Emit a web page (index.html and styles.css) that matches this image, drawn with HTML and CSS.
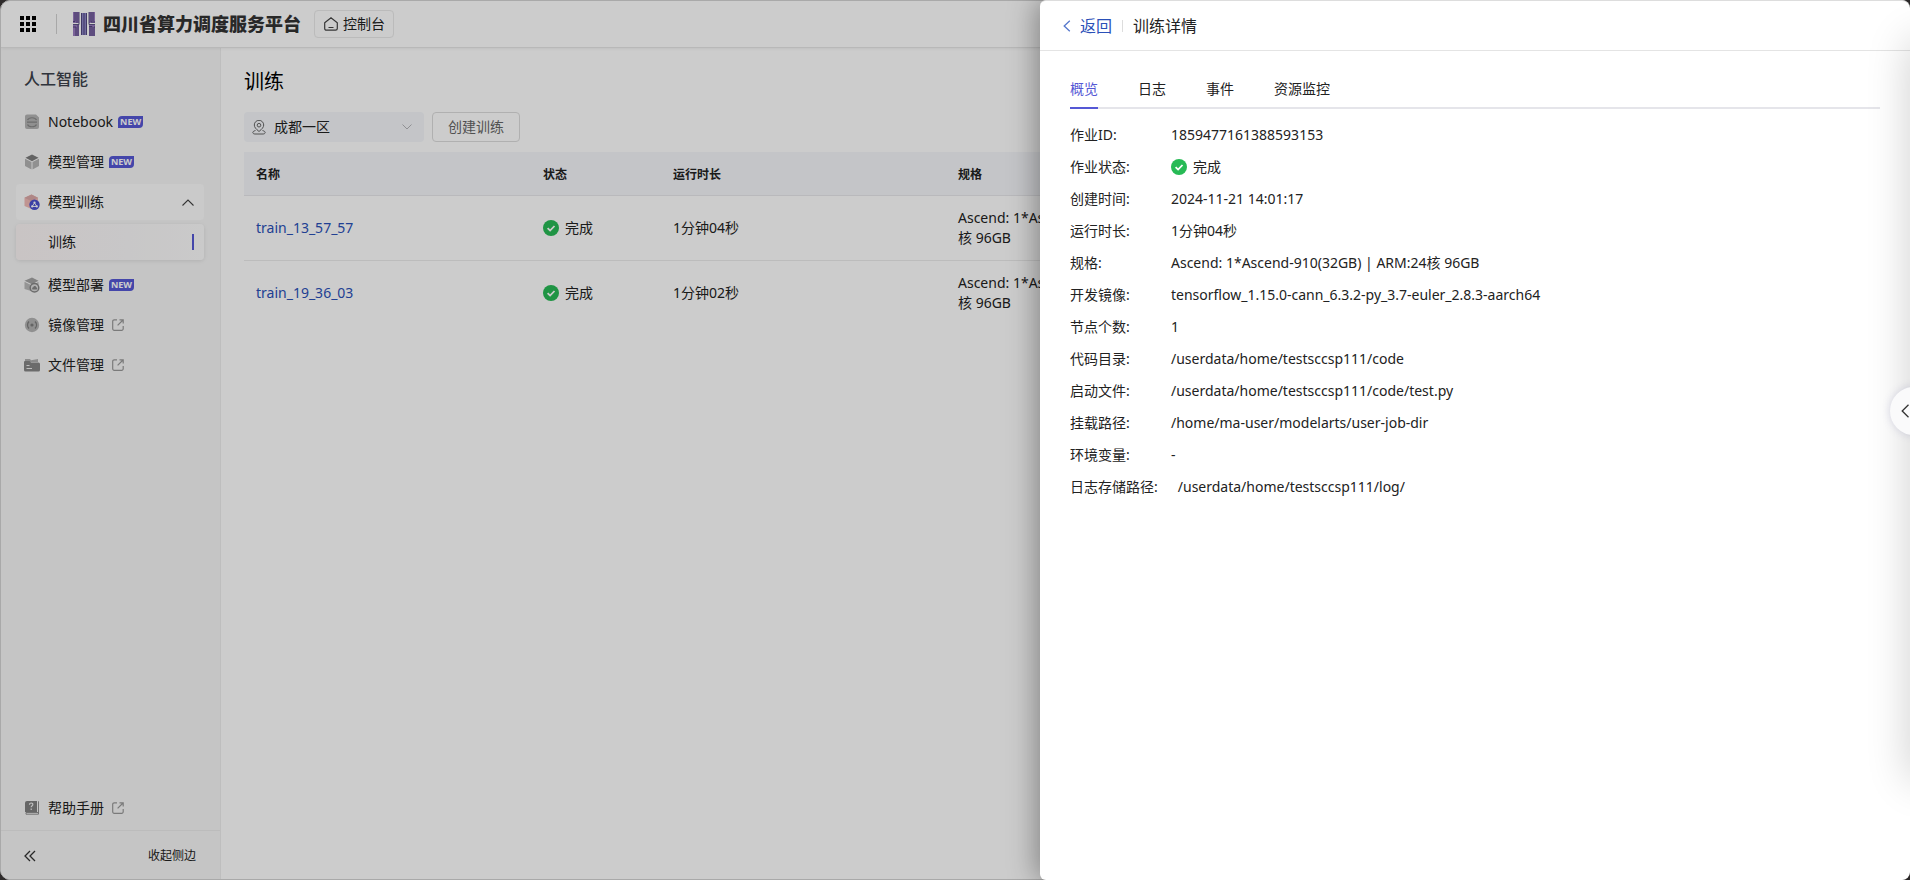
FILE: index.html
```html
<!DOCTYPE html>
<html lang="zh-CN">
<head>
<meta charset="utf-8">
<title>训练详情</title>
<link rel="stylesheet" href="styles.css">
</head>
<body>
<svg class="defs" aria-hidden="true">
  <symbol id="ext" viewBox="0 0 12 12"><path d="M5 .8H2.2A1.5 1.5 0 0 0 .7 2.3v7.5a1.5 1.5 0 0 0 1.5 1.5h7.5a1.5 1.5 0 0 0 1.5-1.5V7M7.5.8h3.7v3.7M11 1 5.6 6.4" fill="none" stroke="currentColor" stroke-width="1.2"/></symbol>
  <symbol id="ok" viewBox="0 0 16 16"><circle cx="8" cy="8" r="8" fill="#27ba55"/><path d="m4.600 8.200 2.500 2.400 4.400-4.600" fill="none" stroke="#fff" stroke-width="1.800"/></symbol>
</svg>
<div class="app">
  <header class="topbar">
    <button class="plain" aria-label="全部应用">
      <svg width="16" height="16" viewBox="0 0 16 16"><path d="M0 0h4v4H0zM6 0h4v4H6zM12 0h4v4h-4zM0 6h4v4H0zM6 6h4v4H6zM12 6h4v4h-4zM0 12h4v4H0zM6 12h4v4H6zM12 12h4v4h-4z"/></svg>
    </button>
    <span class="rule"></span>
    <span class="brand">
      <svg width="22" height="24" viewBox="0 0 22 24"><path d="M0 0h6v11H0zM0 13h6v11H0zM16 0h6v11h-6zM16 13h6v11h-6z" fill="#9a7cc0"/><path d="M8 1h6v22H8z" fill="#8d86c6"/><path d="M2 0v9.500H0M4 0v11M6 0v12.500H0M0 15h3v9M5 13v11M20 0v9M18 0v10h4M16 0v12.500h6M16 14.500h3V24M17 15v9M22 15h-1v9M8.500 1v22M11 1v22M13.500 1v22" fill="none" stroke="#4a3f77" stroke-width=".9"/></svg>
      <strong>四川省算力调度服务平台</strong>
    </span>
    <button class="console">
      <svg width="14" height="14" viewBox="0 0 14 14"><path d="M.7 5.800 7 .8l6.300 5v5.700a1.700 1.700 0 0 1-1.700 1.700H2.400A1.700 1.700 0 0 1 .7 11.500zM4.500 10.500h5" fill="none" stroke="#444" stroke-width="1.200"/></svg>
      控制台
    </button>
  </header>
  <div class="body">
    <aside class="side">
      <h2>人工智能</h2>
      <nav class="menu">
        <a class="item" href="#"><svg class="ico" viewBox="0 0 16 16"><path d="M3 .5h9l3 3V13a2 2 0 0 1-2 2H3a2 2 0 0 1-2-2V2.500a2 2 0 0 1 2-2z" fill="#b4b4b4"/><path d="M3.500 6C5 3 11 3 12.500 6M3.500 10.500C5 13.500 11 13.500 12.500 10.500M3 8.200h10" fill="none" stroke="#888" stroke-width="1.200"/></svg>Notebook<span class="new">NEW</span></a>
        <a class="item" href="#"><svg class="ico" viewBox="0 0 16 16"><path d="m8 .5 6.500 3.300L8 7.200 1.500 3.800z" fill="#7c7c7c"/><path d="M1 4.800 7.500 8v7.500L1 12zM15 4.800 8.500 8v7.500L15 12z" fill="#b4b4b4"/></svg>模型管理<span class="new">NEW</span></a>
        <a class="item open" href="#"><svg class="ico" viewBox="0 0 16 16"><path d="m7.500.5 6.500 3.300v3L7.500 15 .5 12V3.800z" fill="#f0bab6"/><path d="m7.500.5 6.500 3.300-6.500 3.400-7-3.400z" fill="#dba9a8"/><circle cx="10.500" cy="10.800" r="5.200" fill="#4a51cf"/><path d="m10.500 8.800-2.300 3.700h4.600z" fill="none" stroke="#fff" stroke-width=".9"/><circle cx="10.500" cy="8.600" r="1.100" fill="#fff"/><circle cx="8.200" cy="12.400" r="1.100" fill="#fff"/><circle cx="12.800" cy="12.400" r="1.100" fill="#fff"/></svg>模型训练<svg class="caret" width="12" height="7" viewBox="0 0 12 7"><path d="M.5 6.500 6 1l5.500 5.500" fill="none" stroke="#444" stroke-width="1.100"/></svg></a>
        <a class="item sub" href="#">训练<i class="mark"></i></a>
        <a class="item" href="#"><svg class="ico" viewBox="0 0 16 16"><path d="m8 .5 6.500 3.300L8 7.200.5 3.800z" fill="#a4a4a4"/><path d="M.5 4.800 7 8v6L.5 12zM14.500 4.800V8L8 9z" fill="#bababa"/><circle cx="10.500" cy="10.800" r="4.300" fill="#ddd" stroke="#888" stroke-width="1.500"/><path d="M8.500 12.500c-1-2 .5-2.300.8-2.300.6-1.700 2.700-1.300 2.900 0 1.500.4 1.300 2.300 0 2.300z" fill="#888"/></svg>模型部署<span class="new">NEW</span></a>
        <a class="item" href="#"><svg class="ico" viewBox="0 0 16 16"><circle cx="8" cy="8" r="7.200" fill="#b4b4b4"/><circle cx="8" cy="8" r="1.600" fill="#7e7e7e"/><path d="M5 4.500c-2 2-2 5 0 7M11 4.500c2 2 2 5 0 7" fill="none" stroke="#7e7e7e" stroke-width="1.300"/></svg>镜像管理<svg class="ext"><use href="#ext"/></svg></a>
        <a class="item" href="#"><svg class="ico" viewBox="0 0 16 16"><path d="M1 2h5l1 1.200L14 2v3H1z" fill="#b0b0b0"/><path d="M0 5a1 1 0 0 1 1-1h4.500L7 5.500h7.500A1.500 1.500 0 0 1 16 7v6a1.500 1.500 0 0 1-1.500 1.500h-13A1.500 1.500 0 0 1 0 13z" fill="#868686"/><path d="M2.500 8.500h3M2.500 11.500h5.500" stroke="#eee"/></svg>文件管理<svg class="ext"><use href="#ext"/></svg></a>
      </nav>
      <a class="item help" href="#"><svg class="ico" viewBox="0 0 16 16"><path d="M3 1h10v11H1V3a2 2 0 0 1 2-2z" fill="#808080"/><path d="M14.500 1.500v11H2v1.700h12.500V1.500" fill="none" stroke="#8e8e8e"/><path d="M5.500 4.800c0-2.500 3.600-2.300 3.300 0-.1 1-1.600 1-1.600 2.500M7.200 8.500V10" fill="none" stroke="#eee" stroke-width="1.200"/></svg>帮助手册<svg class="ext"><use href="#ext"/></svg></a>
      <button class="fold"><svg width="12" height="12" viewBox="0 0 12 12"><path d="M6 1 1 6l5 5M11 1 6 6l5 5" fill="none" stroke="#333" stroke-width="1.300"/></svg><span>收起侧边</span></button>
    </aside>
    <main class="main">
      <h1>训练</h1>
      <div class="tools">
        <div class="region">
          <svg width="14" height="15" viewBox="0 0 14 15"><path d="M7 11.500C4 9 2.300 7.300 2.300 5a4.700 4.700 0 0 1 9.400 0c0 2.300-1.700 4-4.700 6.500z" fill="none" stroke="#666"/><circle cx="7" cy="5.200" r="1.800" fill="none" stroke="#666"/><path d="M3.500 10.500C-.5 11.500.5 14 3 14h8c2.500 0 3.500-2.500-.5-3.500" fill="none" stroke="#666"/></svg>
          <select aria-label="区域"><option>成都一区</option></select>
          <svg class="down" width="10" height="6" viewBox="0 0 10 6"><path d="m.5.500 4.500 4.500L9.500.5" fill="none" stroke="#b5b5b8"/></svg>
        </div>
        <button class="create">创建训练</button>
      </div>
      <table>
        <colgroup><col class="c1"><col class="c2"><col class="c3"><col></colgroup>
        <thead><tr><th>名称</th><th>状态</th><th>运行时长</th><th>规格</th></tr></thead>
        <tbody>
          <tr><td><a href="#">train_13_57_57</a></td><td><span class="status"><svg><use href="#ok"/></svg>完成</span></td><td>1分钟04秒</td><td><div class="spec">Ascend: 1*Ascend-910(32GB) | ARM:24核 96GB</div></td></tr>
          <tr><td><a href="#">train_19_36_03</a></td><td><span class="status"><svg><use href="#ok"/></svg>完成</span></td><td>1分钟02秒</td><td><div class="spec">Ascend: 1*Ascend-910(32GB) | ARM:24核 96GB</div></td></tr>
        </tbody>
      </table>
    </main>
  </div>
</div>
<div class="mask"></div>
<section class="drawer" aria-label="训练详情">
  <header class="dhead">
    <a class="back" href="#"><svg width="8" height="12" viewBox="0 0 8 12"><path d="M6.800.8 1.200 6l5.600 5.200" fill="none" stroke="#5577cc" stroke-width="1.300"/></svg>返回</a>
    <span class="bar"></span>
    <span>训练详情</span>
  </header>
  <div class="dbody">
    <div class="tabs" role="tablist">
      <button role="tab" class="tab on" aria-selected="true">概览</button>
      <button role="tab" class="tab">日志</button>
      <button role="tab" class="tab">事件</button>
      <button role="tab" class="tab">资源监控</button>
    </div>
    <dl class="info">
      <div><dt>作业ID:</dt><dd>1859477161388593153</dd></div>
      <div><dt>作业状态:</dt><dd><span class="status"><svg><use href="#ok"/></svg>完成</span></dd></div>
      <div><dt>创建时间:</dt><dd>2024-11-21 14:01:17</dd></div>
      <div><dt>运行时长:</dt><dd>1分钟04秒</dd></div>
      <div><dt>规格:</dt><dd>Ascend: 1*Ascend-910(32GB) | ARM:24核 96GB</dd></div>
      <div><dt>开发镜像:</dt><dd>tensorflow_1.15.0-cann_6.3.2-py_3.7-euler_2.8.3-aarch64</dd></div>
      <div><dt>节点个数:</dt><dd>1</dd></div>
      <div><dt>代码目录:</dt><dd>/userdata/home/testsccsp111/code</dd></div>
      <div><dt>启动文件:</dt><dd>/userdata/home/testsccsp111/code/test.py</dd></div>
      <div><dt>挂载路径:</dt><dd>/home/ma-user/modelarts/user-job-dir</dd></div>
      <div><dt>环境变量:</dt><dd>-</dd></div>
      <div><dt>日志存储路径:</dt><dd>/userdata/home/testsccsp111/log/</dd></div>
    </dl>
  </div>
</section>
<div class="dock"></div>
<button class="handle" aria-label="展开"><svg width="8" height="14" viewBox="0 0 8 14"><path d="M7.500.8 1.200 7l6.300 6.200" fill="none" stroke="#333" stroke-width="1.300"/></svg></button>
</body>
</html>
```

FILE: styles.css
```css
* { box-sizing: border-box; }
html, body { height: 100%; margin: 0; }
body {
  background: #2e2b2b;
  color: #222;
  font: 14px/20px "Noto Sans", "Noto Sans CJK SC", sans-serif;
  overflow: hidden;
  position: relative;
}
a { color: inherit; text-decoration: none; }
button { font: inherit; color: inherit; background: none; border: 0; padding: 0; cursor: pointer; }
h1, h2, dl, dd { margin: 0; }
svg { flex: none; display: block; }
.defs { position: absolute; width: 0; height: 0; }

.app {
  height: 100%;
  display: flex;
  flex-direction: column;
  isolation: isolate;
  background: #fff;
  border: 1px solid #d4d4d4;
  border-radius: 10px;
  overflow: hidden;
}
.topbar {
  flex: none;
  height: 47px;
  display: flex;
  align-items: center;
  padding: 0 19px;
  border-bottom: 1px solid #e6e6e6;
  box-shadow: 0 1px 3px rgba(0, 0, 0, .06);
  z-index: 1;
}
.rule { width: 1px; height: 20px; background: #d2d2d2; margin: 0 16px 0 20px; }
.brand { display: flex; align-items: center; gap: 8px; }
.brand strong { font-size: 18px; line-height: 24px; font-weight: 800; color: #333; }
.console {
  display: flex;
  align-items: center;
  gap: 5px;
  height: 28px;
  margin-left: 13px;
  padding: 0 8px 0 9px;
  border: 1px solid #eaeaea;
  border-radius: 4px;
}
.body { flex: 1; display: flex; min-height: 0; }
.side {
  width: 220px;
  flex: none;
  display: flex;
  flex-direction: column;
  background: #f7f7f7;
  border-right: 1px solid #eee;
}
.side h2 { font-size: 16px; line-height: 24px; font-weight: 500; color: #3c414b; padding: 19px 23px 13px; }
.menu { flex: 1; display: flex; flex-direction: column; gap: 4px; padding: 0 16px 0 15px; }
.item {
  height: 36px;
  display: flex;
  align-items: center;
  padding: 0 10px 0 8px;
  border-radius: 4px;
  flex: none;
}
.ico { width: 16px; height: 16px; margin-right: 8px; }
.new {
  background: #5558d5;
  color: #fff;
  font-size: 9px;
  line-height: 12px;
  font-weight: 700;
  padding: 0 2px;
  margin-left: 5px;
  border-radius: 4px 0 4px 0;
}
.ext { width: 12px; height: 12px; margin-left: 8px; color: #999; }
.open { background: #fdfdfd; }
.caret { margin-left: auto; }
.sub {
  padding-left: 32px;
  background: linear-gradient(90deg, #fcf6f6, #fbf9fa 60%, #fdfdfd);
  box-shadow: 0 1px 4px rgba(0, 0, 0, .1);
  margin-bottom: 3px;
}
.mark { width: 2px; height: 16px; background: #5558d5; margin-left: auto; }
.help { margin: 0 16px 4px 15px; }
.fold {
  height: 49px;
  display: flex;
  align-items: center;
  justify-content: space-between;
  padding: 2px 24px 0 23px;
  border-top: 1px solid #ebebeb;
  font-size: 12px;
}
.main { flex: 1; min-width: 0; padding: 20px 23px; }
h1 { font-size: 20px; line-height: 28px; font-weight: 400; color: #000; }
.tools { display: flex; gap: 8px; margin: 16px 0 10px; }
.region {
  width: 180px;
  height: 30px;
  display: flex;
  align-items: center;
  gap: 8px;
  padding: 0 12px 0 8px;
  background: #f5f7fb;
  border-radius: 4px;
}
.region select {
  appearance: none;
  flex: 1;
  min-width: 0;
  border: 0;
  padding: 0;
  background: none;
  font: inherit;
  color: inherit;
}
.create { height: 30px; padding: 0 15px; border: 1px solid #dcdcdc; border-radius: 4px; color: #666; }
table { width: 100%; table-layout: fixed; border-collapse: separate; border-spacing: 0; }
.c1 { width: 287px; }
.c2 { width: 130px; }
.c3 { width: 285px; }
th, td { text-align: left; padding: 0 12px; }
th { height: 44px; padding-top: 2px; background: #f5f7fb; font-size: 12px; font-weight: 700; border-bottom: 1px solid #e8e8ec; }
td { height: 65px; border-bottom: 1px solid #ebebeb; }
tbody tr:last-child td { border-color: transparent; }
td a { color: #2a50b8; }
.spec { width: 262px; }
.status { display: inline-flex; align-items: center; gap: 6px; vertical-align: top; }
.status svg { width: 16px; height: 16px; }

.mask { position: absolute; inset: 0; background: rgba(0, 0, 0, .2); border-radius: 10px; }
.drawer {
  position: absolute;
  top: 0;
  right: 0;
  bottom: 0;
  left: 1040px;
  background: #fff;
  border-top: 1px solid #ddd;
  border-radius: 6px 8px 8px 6px;
  box-shadow: -4px 0 28px rgba(0, 0, 0, .35);
}
.dhead {
  height: 50px;
  display: flex;
  align-items: center;
  padding: 0 23px;
  border-bottom: 1px solid #e4e4e4;
  font-size: 16px;
  line-height: 24px;
}
.back { display: flex; align-items: center; gap: 9px; color: #2a50b8; }
.bar { width: 1px; height: 12px; background: #ddd; margin: 0 10px; }
.dbody { padding: 20px 30px; }
.tabs { display: flex; gap: 40px; border-bottom: 2px solid #e5e5ea; }
.tab { height: 38px; margin-bottom: -2px; border-bottom: 2px solid transparent; }
.tab.on { color: #5558d5; border-color: #5558d5; }
.info { padding-top: 10px; }
.info div { display: flex; gap: 20px; padding: 6px 0; }
.info dt { min-width: 81px; }

.dock {
  position: absolute;
  left: 100%;
  top: 40px;
  bottom: 100px;
  width: 40px;
  box-shadow: 0 0 44px rgba(0, 0, 0, .2);
}
.handle {
  position: absolute;
  top: 387px;
  right: -28px;
  width: 48px;
  height: 48px;
  padding-left: 11px;
  border-radius: 50%;
  background: #fafafb;
  box-shadow: 0 0 8px rgba(90, 90, 150, .22);
}
```
